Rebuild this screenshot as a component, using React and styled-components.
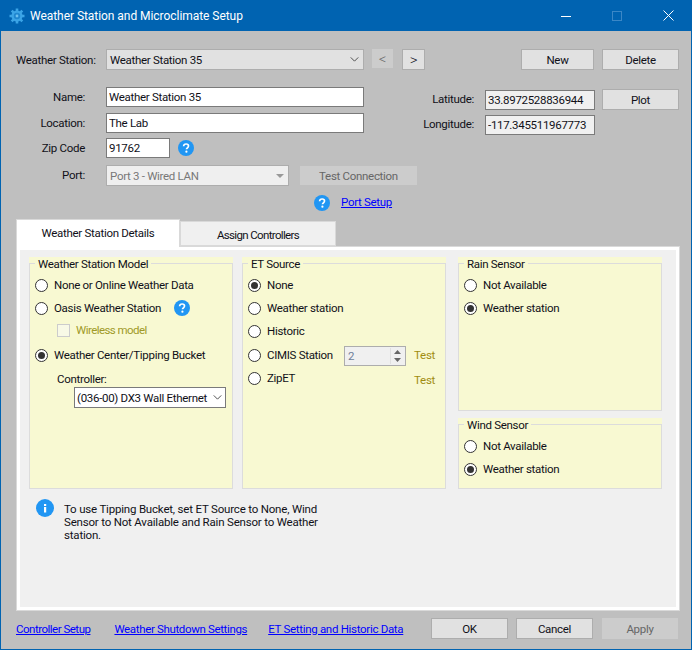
import React from 'react';
import styled, { createGlobalStyle } from 'styled-components';

const Global = createGlobalStyle`
  html, body { margin: 0; padding: 0; background: #c0c0c0; }
  * { box-sizing: border-box; }
`;

const Win = styled.div`
  width: 692px; height: 650px; background: #bfbfbf;
  border: 1px solid #0063b1; border-top: 0;
  font: 11.5px Roboto, sans-serif; letter-spacing: -0.3px; color: #101018;
  display: flex; flex-direction: column;
  overflow: hidden;
`;
const TitleBar = styled.div`
  height: 31px; flex: none; background: #0063b1; color: #fff; display: flex; align-items: center;
  padding-left: 8px; font-size: 12px; letter-spacing: -0.05px; gap: 5px;
`;
const TitleText = styled.div`flex: 1;`;
const WinBtn = styled.div`
  width: 46px; height: 31px; display: flex; align-items: center; justify-content: center;
`;
const Content = styled.div`
  flex: 1; display: flex; flex-direction: column; padding: 18px 12px 0 15px; min-height: 0;
`;
const TopRow = styled.div`display: flex; align-items: flex-start; height: 21px;`;
const TopLabel = styled.div`width: 90px; line-height: 20px; padding-top: 1px; white-space: nowrap;`;
const Combo = styled.div`
  width: ${p => p.$w}px; height: 21px; display: flex; align-items: center; justify-content: space-between;
  padding: 0 4px 0 3px; background: #e1e1e1; border: 1px solid #adadad; white-space: nowrap;
`;
const Spacer = styled.div`flex: 1;`;
const Btn = styled.div`
  width: ${p => p.$w}px; height: ${p => p.$h || 21}px;
  margin-left: ${p => p.$ml || 0}px;
  display: flex; align-items: center; justify-content: center; flex: none;
  background: ${p => p.$off ? '#cccccc' : '#e1e1e1'};
  border: 1px solid ${p => p.$off ? '#cccccc' : '#adadad'};
  color: ${p => p.$off ? '#666666' : '#101018'};
  font-size: ${p => p.$fs || 11.5}px;
  font-weight: ${p => p.$fs ? 300 : 400};
  white-space: nowrap;
`;
const FormArea = styled.div`display: flex; margin-top: 17px; height: 99px;`;
const LeftForm = styled.div`width: 402px; flex: none; display: flex; flex-direction: column;`;
const Row = styled.div`display: flex; align-items: center; height: ${p => p.$h}px; margin-bottom: ${p => p.$mb || 0}px;`;
const FieldLabel = styled.div`width: 69px; text-align: right; margin-right: 21px; flex: none; white-space: nowrap; padding-bottom: ${p => p.$pb || 0}px;`;
const TextInput = styled.input`
  width: ${p => p.$w}px; height: 20px; padding: 0 2px; border: 1px solid #7a7a7a; background: ${p => p.$bg || '#fff'};
  font: inherit; letter-spacing: inherit; color: inherit; outline: 0; border-radius: 0; flex: none; margin-top: ${p => p.$mt || 0}px;
`;
const RightForm = styled.div`flex: 1; display: flex; flex-direction: column; padding-top: 2px;`;
const CoordLabel = styled.div`width: 56px; text-align: right; margin-right: 11px; flex: none; white-space: nowrap; padding-bottom: 2px;`;
const DisabledCombo = styled.div`
  width: 183px; height: 21px; background: #efefef; border: 1px solid #adadad; color: #787878;
  display: flex; align-items: center; justify-content: space-between; padding: 0 4px 0 3px; flex: none;
`;
const PortSetupRow = styled.div`display: flex; align-items: center; height: 16px; margin: 9px 0 0 298px; gap: 11px;`;
const A = styled.a`color: #0000ff; text-decoration: underline; white-space: nowrap;`;
const PortLink = styled(A)`margin-bottom: 2px;`;

const TabStrip = styled.div`display: flex; align-items: flex-end; height: 28px; margin-top: 7px; position: relative; z-index: 1;`;
const Tab = styled.div`
  display: flex; align-items: center; justify-content: center;
  width: ${p => p.$w}px; height: ${p => p.$active ? 28 : 25}px; 
  background: ${p => p.$active ? '#fff' : '#f0f0f0'};
  border: 1px solid #d9d9d9; border-bottom: ${p => p.$active ? 0 : '1px solid #d9d9d9'};
  padding-bottom: ${p => p.$active ? 2 : 0}px;
  padding-top: ${p => p.$active ? 0 : 3}px;
  margin-bottom: ${p => p.$active ? -1 : 0}px;
  letter-spacing: ${p => p.$active ? -0.3 : -0.65}px;
`;
const Panel = styled.div`
  width: 664px; height: 365px; background: #f0f0f0; border: 1px solid #d9d9d9; 
  box-shadow: inset 0 0 0 3px #fff; padding: 10px 12px 0 12px; flex: none; display: flex; flex-direction: column;
`;
const Groups = styled.div`display: grid; grid-template-columns: 204px 204px 207px; column-gap: 9px; height: 232px;`;
const Col3 = styled.div`display: flex; flex-direction: column; gap: 7px; margin-left: 3px;`;
const Group = styled.div`
  position: relative; height: ${p => p.$h || 232}px; flex: none;
  background: #f8f9d2;
  padding-top: 6px;
`;
const GroupBox = styled.div`
  height: 100%; border: 1px solid #dcdcdc; padding-top: 3px; display: flex; flex-direction: column;
`;
const Legend = styled.div`
  position: absolute; left: 6px; top: 0; padding: 0 3px; line-height: 14px; background: #f8f9d2; white-space: nowrap;
`;
const RadioRow = styled.div`
  display: flex; align-items: center; height: 16px; margin-top: ${p => p.$mt || 0}px; margin-left: 5px; padding-right: 10px; gap: 6px; white-space: nowrap;
`;
const Radio = styled.span`
  width: 13px; height: 13px; border-radius: 50%; background: #fff; border: 1px solid #333; flex: none;
  display: flex; align-items: center; justify-content: center;
  &::after { content: ''; display: ${p => p.$on ? 'block' : 'none'}; width: 7px; height: 7px; border-radius: 50%; background: #333; }
`;
const CheckRow = styled.div`display: flex; align-items: center; height: 16px; margin: 6px 0 0 27px; gap: 6px; color: #a09a28; letter-spacing: -0.55px;`;
const Check = styled.span`width: 13px; height: 13px; border: 1px solid #ccc; flex: none; background: #f8f9e6;`;
const CtlLabel = styled.div`margin: 8px 0 0 27px; line-height: 16px;`;
const CtlSelect = styled.div`
  width: 152px; height: 21px; margin: 0 0 0 44px; background: #fff; border: 1px solid #7a7a7a;
  display: flex; align-items: center; justify-content: space-between; padding: 0 3px 0 2px; white-space: nowrap; overflow: hidden;
`;
const TestLink = styled.span`color: #a08c10; margin-left: ${p => p.$ml || 0}px; margin-top: ${p => p.$mt || 0}px;`;
const ZipTest = styled(TestLink)`margin-left: auto;`;
const Spin = styled.div`
  width: 62px; height: 20px; border: 1px solid #adadad; background: #f0f0f0; margin-left: auto; flex: none;
  display: flex; justify-content: space-between; align-items: center; padding-left: 3px; color: #6f7f9a; margin-top: 2px;
`;
const SpinBtns = styled.div`
  width: 14px; height: 16px; margin-right: 1px; display: flex; flex-direction: column; background: #f0f0f0; align-items: center; justify-content: space-around; border-left: 1px solid #e0e0e0;
`;
const Note = styled.div`display: flex; margin: 10px 0 0 7px; gap: 10px;`;
const NoteText = styled.div`width: 262px; line-height: 13px; padding-top: 4px; letter-spacing: -0.19px;`;
const Bottom = styled.div`display: flex; align-items: center; height: 21px; margin-top: 7px; padding-right: 1px;`;
const BLink = styled(A)`margin-right: ${p => p.$mr}px; flex: none; letter-spacing: ${p => p.$ls || -0.3}px;`;

const Help = ({ ml = 0 }) => (
  <svg width="16" height="16" viewBox="0 0 16 16" style={{ marginLeft: ml, flex: 'none' }}>
    <circle cx="8" cy="8" r="8" fill="#2196f3" />
    <path d="M5.6 6.2C5.7 4.8 6.7 4 8.1 4c1.400 0 2.400.8 2.400 2 0 1-.6 1.500-1.200 2-.6.4-.8.7-.8 1.300" fill="none" stroke="#fff" strokeWidth="1.700" />
    <circle cx="8.400" cy="11.700" r="1.100" fill="#fff" />
  </svg>
);
const Chev = ({ c = '#444' }) => (
  <svg width="9" height="5" viewBox="0 0 10 6"><path d="M.5.5 5 5 9.500.5" fill="none" stroke={c} strokeWidth="1.100" /></svg>
);

export default function App() {
  return (
    <Win>
      <Global />
      <TitleBar>
        <svg width="16" height="16" viewBox="0 0 16 16">
          <path d="M8 .5v15M.5 8h15M2.700 2.700l10.600 10.600M2.700 13.300 13.300 2.700" stroke="#3ba4e6" strokeWidth="2.600" />
          <circle cx="8" cy="8" r="5.600" fill="#3ba4e6" />
          <circle cx="8" cy="8" r="3.200" fill="#1f86cf" />
          <circle cx="8" cy="8" r="1.400" fill="#6cc0f0" />
        </svg>
        <TitleText>Weather Station and Microclimate Setup</TitleText>
        <WinBtn><svg width="10" height="10"><path d="M0 5.500h10" stroke="#fff" /></svg></WinBtn>
        <WinBtn><svg width="10" height="10"><rect x=".5" y=".5" width="9" height="9" fill="none" stroke="#3b87c6" /></svg></WinBtn>
        <WinBtn><svg width="11" height="11"><path d="M.5.500l10 10M10.500.500l-10 10" stroke="#fff" /></svg></WinBtn>
      </TitleBar>
      <Content>
        <TopRow>
          <TopLabel>Weather Station:</TopLabel>
          <Combo $w={258}>Weather Station 35<Chev /></Combo>
          <Btn $w={21} $h={19} $ml={8} $fs={15} $off>&lt;</Btn>
          <Btn $w={23} $ml={9} $fs={15}>&gt;</Btn>
          <Spacer />
          <Btn $w={73}>New</Btn>
          <Btn $w={77} $ml={8}>Delete</Btn>
        </TopRow>
        <FormArea>
          <LeftForm>
            <Row $h={20} $mb={6}><FieldLabel>Name:</FieldLabel><TextInput $w={258} defaultValue="Weather Station 35" /></Row>
            <Row $h={20} $mb={5}><FieldLabel>Location:</FieldLabel><TextInput $w={258} defaultValue="The Lab" /></Row>
            <Row $h={20} $mb={7}><FieldLabel>Zip Code</FieldLabel><TextInput $w={64} defaultValue="91762" /><Help ml={8} /></Row>
            <Row $h={21}>
              <FieldLabel $pb={2}>Port:</FieldLabel>
              <DisabledCombo>Port 3 - Wired LAN<svg width="8" height="4"><path d="M0 0h8L4 4z" fill="#999" /></svg></DisabledCombo>
              <Btn $w={117} $h={19} $ml={11} $off>Test Connection</Btn>
            </Row>
          </LeftForm>
          <RightForm>
            <Row $h={21} $mb={5}>
              <CoordLabel>Latitude:</CoordLabel><TextInput $w={110} $mt={1} $bg="#f0f0f0" defaultValue="33.8972528836944" />
              <Btn $w={77} $ml={7}>Plot</Btn>
            </Row>
            <Row $h={20}>
              <CoordLabel>Longitude:</CoordLabel><TextInput $w={110} $bg="#f0f0f0" defaultValue="-117.345511967773" />
            </Row>
          </RightForm>
        </FormArea>
        <PortSetupRow><Help /><PortLink href="#">Port Setup</PortLink></PortSetupRow>
        <TabStrip>
          <Tab $active $w={164}>Weather Station Details</Tab>
          <Tab $w={156}>Assign Controllers</Tab>
        </TabStrip>
        <Panel>
          <Groups>
            <Group>
              <Legend>Weather Station Model</Legend>
              <GroupBox>
                <RadioRow $mt={10}><Radio />None or Online Weather Data</RadioRow>
                <RadioRow $mt={7}><Radio />Oasis Weather Station<Help ml={7} /></RadioRow>
                <CheckRow><Check />Wireless model</CheckRow>
                <RadioRow $mt={9}><Radio $on />Weather Center/Tipping Bucket</RadioRow>
                <CtlLabel>Controller:</CtlLabel>
                <CtlSelect>(036-00) DX3 Wall Ethernet<Chev /></CtlSelect>
              </GroupBox>
            </Group>
            <Group>
              <Legend>ET Source</Legend>
              <GroupBox>
                <RadioRow $mt={10}><Radio $on />None</RadioRow>
                <RadioRow $mt={7}><Radio />Weather station</RadioRow>
                <RadioRow $mt={7}><Radio />Historic</RadioRow>
                <RadioRow $mt={8}><Radio />CIMIS Station<Spin>2<SpinBtns>
                  <svg width="7" height="4"><path d="M0 4h7L3.500 0z" fill="#666" /></svg>
                  <svg width="7" height="4"><path d="M0 0h7L3.500 4z" fill="#666" /></svg>
                </SpinBtns></Spin><TestLink $ml={2}>Test</TestLink></RadioRow>
                <RadioRow $mt={7}><Radio />ZipET<ZipTest $mt={4}>Test</ZipTest></RadioRow>
              </GroupBox>
            </Group>
            <Col3>
              <Group $h={154}>
                <Legend>Rain Sensor</Legend>
                <GroupBox>
                  <RadioRow $mt={10}><Radio />Not Available</RadioRow>
                  <RadioRow $mt={7}><Radio $on />Weather station</RadioRow>
                </GroupBox>
              </Group>
              <Group $h={71}>
                <Legend>Wind Sensor</Legend>
                <GroupBox>
                  <RadioRow $mt={10}><Radio />Not Available</RadioRow>
                  <RadioRow $mt={7}><Radio $on />Weather station</RadioRow>
                </GroupBox>
              </Group>
            </Col3>
          </Groups>
          <Note>
            <svg width="18" height="18" viewBox="0 0 18 18" style={{ flex: 'none' }}>
              <circle cx="9" cy="9" r="9" fill="#2196f3" />
              <rect x="8" y="8" width="2.200" height="5.500" fill="#fff" />
              <rect x="8" y="5" width="2.200" height="2" fill="#fff" />
            </svg>
            <NoteText>To use Tipping Bucket, set ET Source to None, Wind Sensor to Not Available and Rain Sensor to Weather station.</NoteText>
          </Note>
        </Panel>
        <Bottom>
          <BLink href="#" $mr={24} $ls={-0.5}>Controller Setup</BLink>
          <BLink href="#" $mr={21} $ls={-0.35}>Weather Shutdown Settings</BLink>
          <BLink href="#" $mr={0}>ET Setting and Historic Data</BLink>
          <Spacer />
          <Btn $w={77}>OK</Btn>
          <Btn $w={77} $ml={8}>Cancel</Btn>
          <Btn $w={76} $ml={9} $off>Apply</Btn>
        </Bottom>
      </Content>
    </Win>
  );
}
